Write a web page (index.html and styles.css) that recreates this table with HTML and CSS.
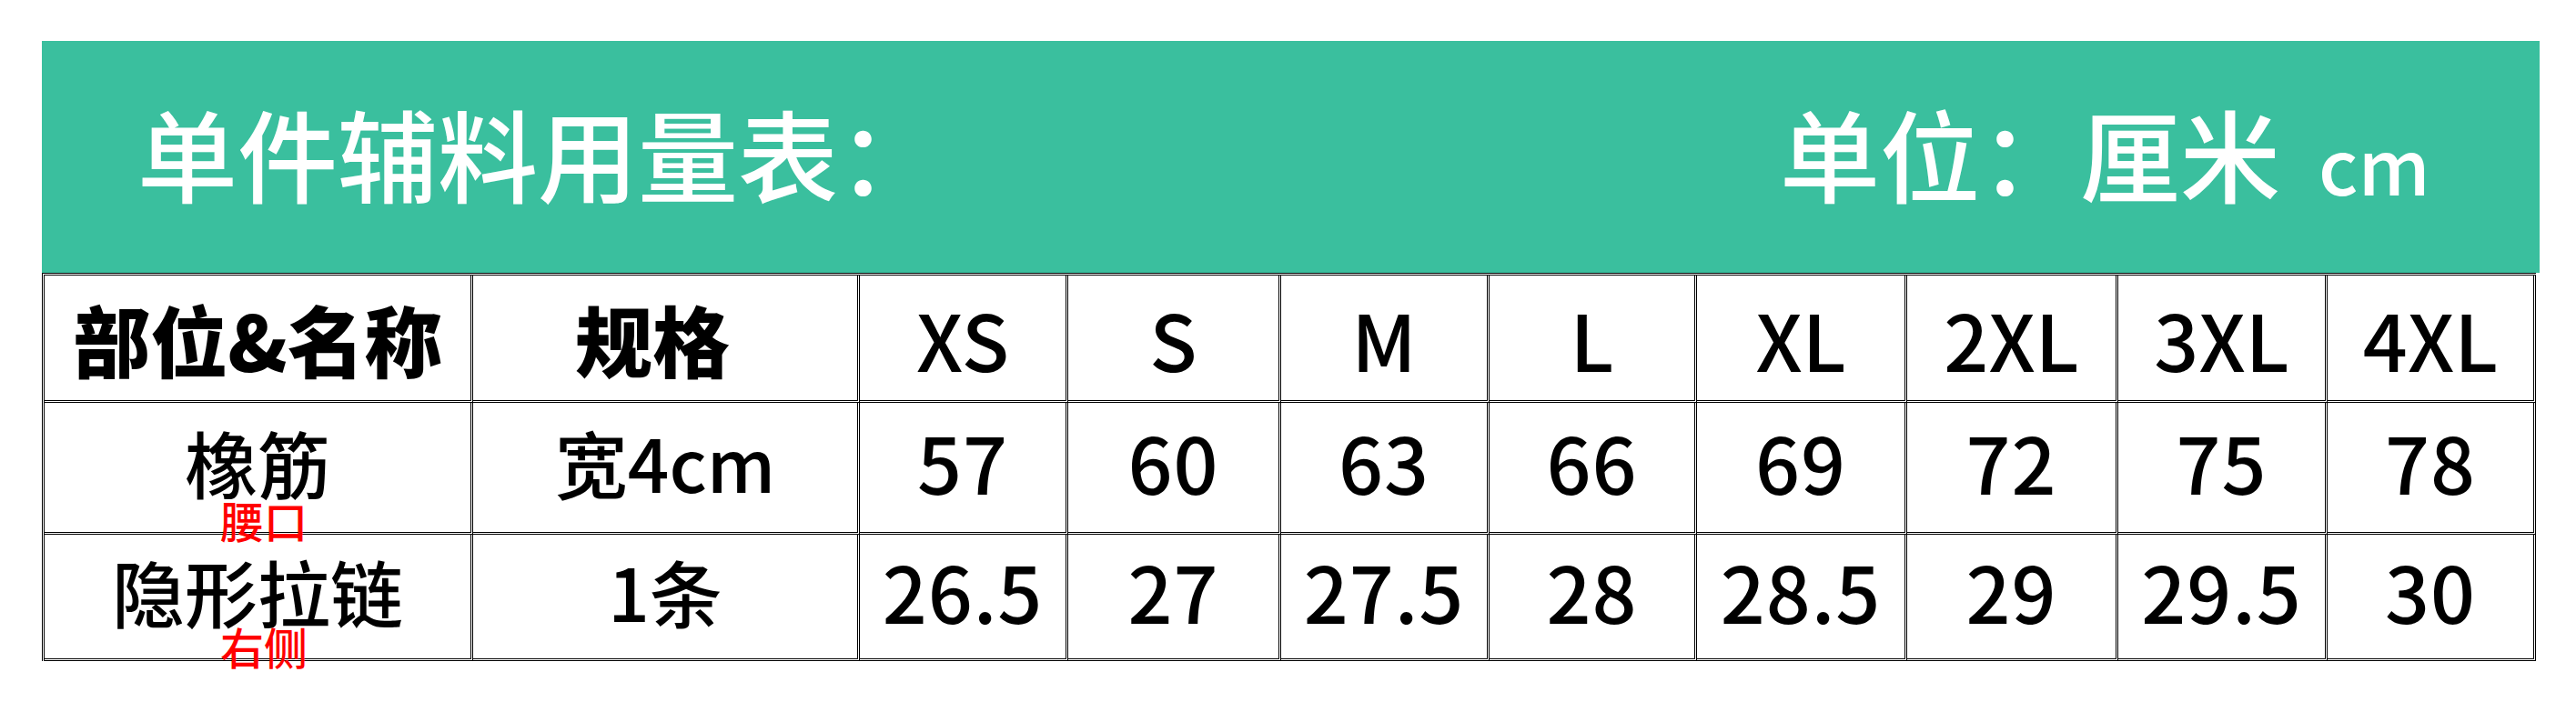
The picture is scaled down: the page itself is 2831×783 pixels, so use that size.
FILE: index.html
```html
<!DOCTYPE html>
<html lang="zh-CN">
<head>
<meta charset="utf-8">
<title>单件辅料用量表</title>
<link rel="stylesheet" href="styles.css">
</head>
<body>
<div class="page">
  <div class="banner">
    <div class="title">单件辅料用量表：</div>
    <div class="unit">单位：厘米<span class="cm">cm</span></div>
  </div>
  <div class="table">
    <div class="cell head">部位&amp;名称</div>
    <div class="cell head head-spec">规格</div>
    <div class="cell size">XS</div>
    <div class="cell size">S</div>
    <div class="cell size">M</div>
    <div class="cell size">L</div>
    <div class="cell size">XL</div>
    <div class="cell size">2XL</div>
    <div class="cell size">3XL</div>
    <div class="cell size">4XL</div>

    <div class="cell name row1">橡筋<span class="note note-waist">腰口</span></div>
    <div class="cell name row1">宽4cm</div>
    <div class="cell num row1">57</div>
    <div class="cell num row1">60</div>
    <div class="cell num row1">63</div>
    <div class="cell num row1">66</div>
    <div class="cell num row1">69</div>
    <div class="cell num row1">72</div>
    <div class="cell num row1">75</div>
    <div class="cell num row1">78</div>

    <div class="cell name row2">隐形拉链<span class="note note-side">右侧</span></div>
    <div class="cell name row2">1条</div>
    <div class="cell num row2">26.5</div>
    <div class="cell num row2">27</div>
    <div class="cell num row2">27.5</div>
    <div class="cell num row2">28</div>
    <div class="cell num row2">28.5</div>
    <div class="cell num row2">29</div>
    <div class="cell num row2">29.5</div>
    <div class="cell num row2">30</div>
  </div>
</div>
</body>
</html>
```

FILE: styles.css
```css
html, body {
  margin: 0;
  padding: 0;
  background: #ffffff;
}

body {
  font-family: "Noto Sans CJK SC", "Noto Sans", sans-serif;
  color: #000000;
}

.page {
  box-sizing: border-box;
  min-height: 783px;
  padding: 45px 0 0 46px;
}

.banner {
  width: 2745px;
  height: 255px;
  background: #3abf9e;
  color: #ffffff;
  display: flex;
  align-items: center;
  box-sizing: border-box;
  padding: 0 0 12px 105px;
}

.title {
  font-size: 110px;
  font-weight: 500;
  line-height: 1;
  flex: 1;
}

.unit {
  font-size: 110px;
  font-weight: 500;
  line-height: 1;
  width: 835px;
  white-space: nowrap;
}

.cm {
  font-size: 84px;
  margin-left: 42px;
}

.table {
  display: grid;
  grid-template-columns: 471px 425px 229px 234px 229px 228px 231px 232px 230px 229px;
  grid-template-rows: 140px 145px 139px;
  width: max-content;
  border-top: 3px double #000;
  border-left: 3px double #000;
}

.cell {
  position: relative;
  box-sizing: border-box;
  border-right: 3px double #000;
  border-bottom: 3px double #000;
  display: flex;
  align-items: center;
  justify-content: center;
  line-height: 1;
  white-space: nowrap;
  overflow: visible;
}

.head {
  font-size: 85px;
  font-weight: 900;
}

.head-spec {
  padding-right: 28px;
}

.size {
  font-size: 86px;
  font-weight: 500;
}

.name {
  font-size: 80px;
  font-weight: 500;
}

.num {
  font-size: 86px;
  font-weight: 500;
  letter-spacing: 1px;
}

.row1, .row2 {
  padding-bottom: 14px;
}

.note {
  position: absolute;
  z-index: 2;
  color: #ff0000;
  font-size: 48px;
  font-weight: 500;
  line-height: 1;
  left: 193px;
}

.note-waist {
  top: 104px;
}

.note-side {
  top: 98px;
}
```
